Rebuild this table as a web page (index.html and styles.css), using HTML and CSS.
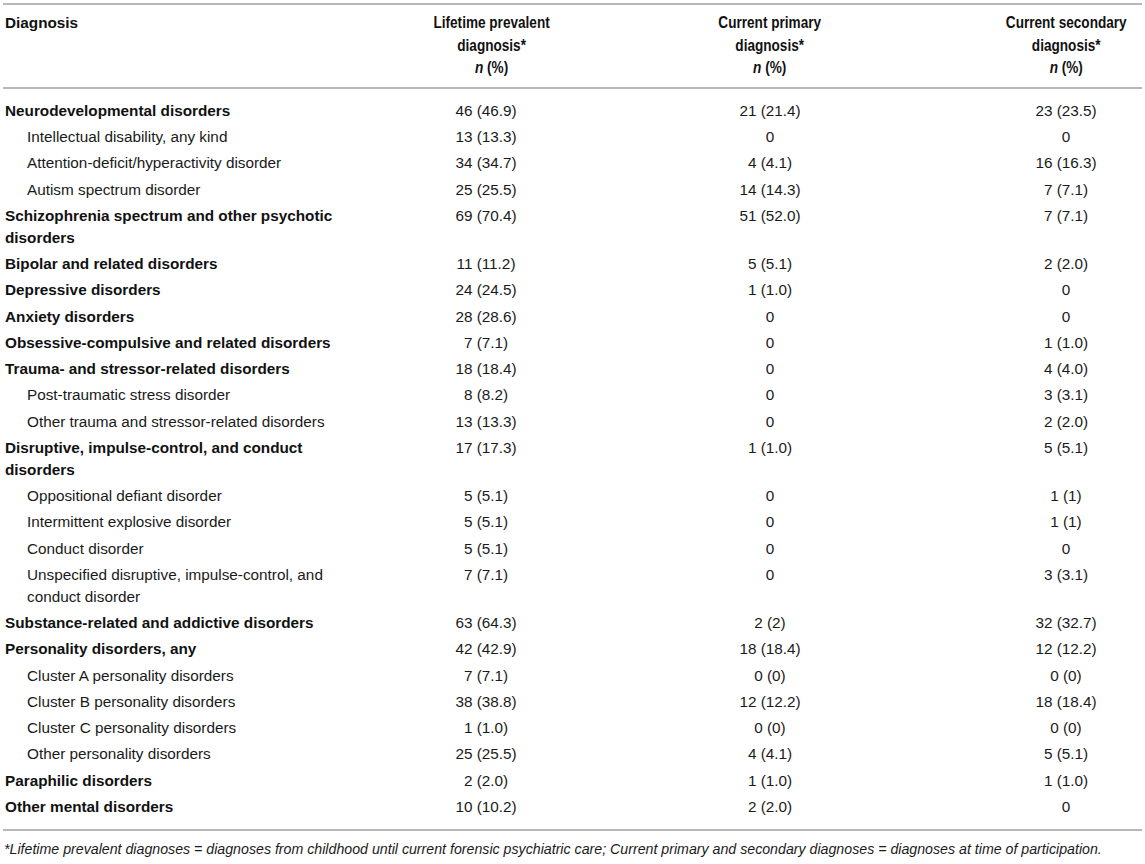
FILE: index.html
```html
<!DOCTYPE html>
<html lang="en">
<head>
<meta charset="utf-8">
<title>Diagnoses</title>
<link rel="stylesheet" href="styles.css">
</head>
<body>
<div class="wrap">
<table class="tbl">
  <colgroup>
    <col class="c1"><col class="c2"><col class="c3"><col class="c4">
  </colgroup>
  <thead>
    <tr>
      <th class="lbl">Diagnosis</th>
      <th class="num"><span class="hd">Lifetime prevalent<br>diagnosis*<br><i>n</i> (%)</span></th>
      <th class="num"><span class="hd">Current primary<br>diagnosis*<br><i>n</i> (%)</span></th>
      <th class="num"><span class="hd">Current secondary<br>diagnosis*<br><i>n</i> (%)</span></th>
    </tr>
  </thead>
  <tbody>
    <tr class="first cat"><td>Neurodevelopmental disorders</td><td>46 (46.9)</td><td>21 (21.4)</td><td>23 (23.5)</td></tr>
    <tr class="sub"><td>Intellectual disability, any kind</td><td>13 (13.3)</td><td>0</td><td>0</td></tr>
    <tr class="sub"><td>Attention-deficit/hyperactivity disorder</td><td>34 (34.7)</td><td>4 (4.1)</td><td>16 (16.3)</td></tr>
    <tr class="sub"><td>Autism spectrum disorder</td><td>25 (25.5)</td><td>14 (14.3)</td><td>7 (7.1)</td></tr>
    <tr class="cat"><td>Schizophrenia spectrum and other psychotic disorders</td><td>69 (70.4)</td><td>51 (52.0)</td><td>7 (7.1)</td></tr>
    <tr class="cat"><td>Bipolar and related disorders</td><td>11 (11.2)</td><td>5 (5.1)</td><td>2 (2.0)</td></tr>
    <tr class="cat"><td>Depressive disorders</td><td>24 (24.5)</td><td>1 (1.0)</td><td>0</td></tr>
    <tr class="cat"><td>Anxiety disorders</td><td>28 (28.6)</td><td>0</td><td>0</td></tr>
    <tr class="cat"><td>Obsessive-compulsive and related disorders</td><td>7 (7.1)</td><td>0</td><td>1 (1.0)</td></tr>
    <tr class="cat"><td>Trauma- and stressor-related disorders</td><td>18 (18.4)</td><td>0</td><td>4 (4.0)</td></tr>
    <tr class="sub"><td>Post-traumatic stress disorder</td><td>8 (8.2)</td><td>0</td><td>3 (3.1)</td></tr>
    <tr class="sub"><td>Other trauma and stressor-related disorders</td><td>13 (13.3)</td><td>0</td><td>2 (2.0)</td></tr>
    <tr class="cat"><td>Disruptive, impulse-control, and conduct disorders</td><td>17 (17.3)</td><td>1 (1.0)</td><td>5 (5.1)</td></tr>
    <tr class="sub"><td>Oppositional defiant disorder</td><td>5 (5.1)</td><td>0</td><td>1 (1)</td></tr>
    <tr class="sub"><td>Intermittent explosive disorder</td><td>5 (5.1)</td><td>0</td><td>1 (1)</td></tr>
    <tr class="sub"><td>Conduct disorder</td><td>5 (5.1)</td><td>0</td><td>0</td></tr>
    <tr class="sub"><td>Unspecified disruptive, impulse-control, and conduct disorder</td><td>7 (7.1)</td><td>0</td><td>3 (3.1)</td></tr>
    <tr class="cat"><td>Substance-related and addictive disorders</td><td>63 (64.3)</td><td>2 (2)</td><td>32 (32.7)</td></tr>
    <tr class="cat"><td>Personality disorders, any</td><td>42 (42.9)</td><td>18 (18.4)</td><td>12 (12.2)</td></tr>
    <tr class="sub"><td>Cluster A personality disorders</td><td>7 (7.1)</td><td>0 (0)</td><td>0 (0)</td></tr>
    <tr class="sub"><td>Cluster B personality disorders</td><td>38 (38.8)</td><td>12 (12.2)</td><td>18 (18.4)</td></tr>
    <tr class="sub"><td>Cluster C personality disorders</td><td>1 (1.0)</td><td>0 (0)</td><td>0 (0)</td></tr>
    <tr class="sub"><td>Other personality disorders</td><td>25 (25.5)</td><td>4 (4.1)</td><td>5 (5.1)</td></tr>
    <tr class="cat"><td>Paraphilic disorders</td><td>2 (2.0)</td><td>1 (1.0)</td><td>1 (1.0)</td></tr>
    <tr class="cat last"><td>Other mental disorders</td><td>10 (10.2)</td><td>2 (2.0)</td><td>0</td></tr>
  </tbody>
</table>
<p class="note">*Lifetime prevalent diagnoses = diagnoses from childhood until current forensic psychiatric care; Current primary and secondary diagnoses = diagnoses at time of participation.</p>
</div>
</body>
</html>
```
FILE: styles.css
```css
html, body {
  margin: 0;
  padding: 0;
  background: #ffffff;
}
body {
  font-family: "Liberation Sans", Arial, Helvetica, sans-serif;
  color: #1a1a1a;
  font-size: 15.3px;
}
.wrap {
  padding: 3px 3px 0 3px;
}
.tbl {
  width: 1139px;
  border-collapse: collapse;
  table-layout: fixed;
  border-top: 2px solid #b8b8b8;
  border-bottom: 2px solid #b8b8b8;
}
.c1 { width: 419px; }
.c2 { width: 128px; }
.c3 { width: 440px; }
.c4 { width: 152px; }
.tbl thead th {
  font-weight: bold;
  color: #111;
  vertical-align: top;
  line-height: 22.5px;
  padding: 7px 2px 7px 2px;
  border-bottom: 2px solid #b8b8b8;
}
.tbl thead th.lbl {
  text-align: left;
  padding-left: 2px;
}
.tbl thead th.num {
  text-align: center;
  white-space: nowrap;
}
.hd {
  display: inline-block;
  font-size: 15.8px;
  transform: scaleX(0.86);
  transform-origin: center top;
}
.tbl tbody td {
  line-height: 21.7px;
  padding: 2.3px 2px;
  text-align: center;
  vertical-align: top;
}
.tbl tbody td:first-child {
  text-align: left;
  padding-right: 57px;
}
.tbl tbody tr.cat td:first-child {
  font-weight: bold;
  color: #111;
}
.tbl tbody tr.sub td:first-child {
  padding-left: 24px;
}
.tbl tbody tr.first td {
  padding-top: 11.3px;
}
.tbl tbody tr.last td {
  padding-bottom: 11.3px;
}
.note {
  margin: 10px 0 0 1px;
  font-style: italic;
  font-size: 14.2px;
  line-height: 16px;
  color: #1a1a1a;
}
```
